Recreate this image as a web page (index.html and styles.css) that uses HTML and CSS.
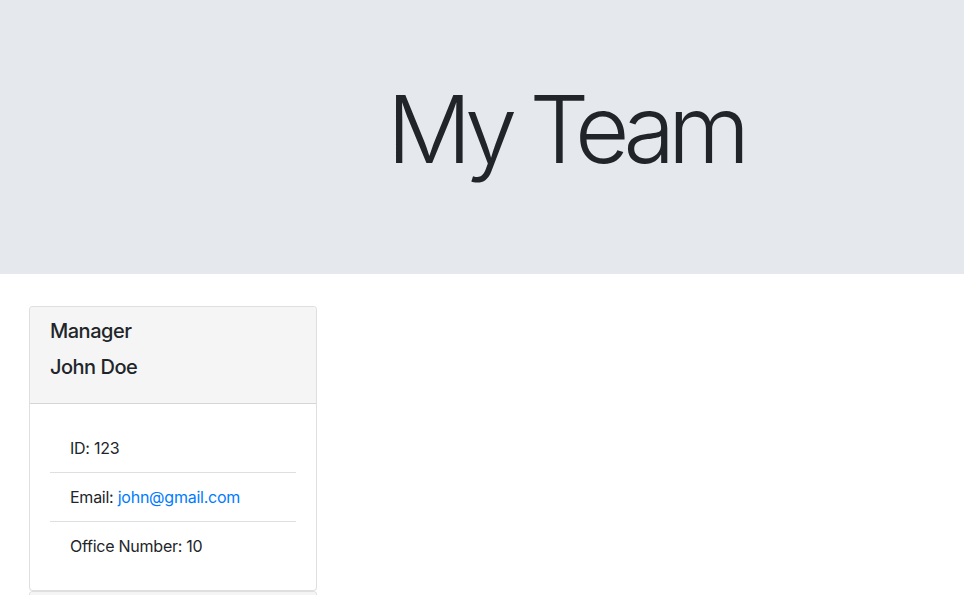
FILE: index.html
```html
<!DOCTYPE html>
<html>
<head>
<meta charset="utf-8">
<link rel="stylesheet" href="styles.css">
</head>
<body>
<header class="jumbotron">
  <h1 class="display">My Team</h1>
</header>
<main class="team">
  <div class="card">
    <div class="card-header">
      <h5 class="card-title">Manager</h5>
      <h5 class="card-title">John Doe</h5>
    </div>
    <div class="card-body">
      <ul class="list-group">
        <li class="list-item">ID: 123</li>
        <li class="list-item">Email: <a href="#">john@gmail.com</a></li>
        <li class="list-item">Office Number: 10</li>
      </ul>
    </div>
  </div>
  <div class="card"><div class="card-header"></div></div>
</main>
</body>
</html>
```
FILE: styles.css
```css
* { box-sizing: border-box; }
body {
  margin: 0;
  font-family: Inter, "Helvetica Neue", Arial, sans-serif;
  font-size: 16px;
  line-height: 1.5;
  color: #212529;
  background: #fff;
  letter-spacing: -0.25px;
}
.jumbotron {
  background: #e5e8ec;
  height: 274px;
  margin-bottom: 32px;
  display: flex;
  align-items: center;
  justify-content: center;
  padding-left: 166px;
}
.display {
  margin: -16px 0 0;
  font-size: 94px;
  font-weight: 300;
  line-height: 1.2;
  letter-spacing: -7px;
}
.team {
  padding: 0 29px;
  display: flex;
  flex-direction: column;
  align-items: flex-start;
}
.card {
  width: 288px;
  border: 1px solid rgba(0,0,0,.125);
  border-radius: 4px;
  background: #fff;
  overflow: hidden;
}
.card-header {
  background: #f5f5f5;
  padding: 12px 20px 12px;
  border-bottom: 1px solid rgba(0,0,0,.125);
  min-height: 40px;
}
.card-title {
  margin: 0 0 12px;
  font-size: 20px;
  font-weight: 500;
  line-height: 1.2;
  letter-spacing: -0.5px;
}
.card-body { padding: 20px; }
.list-group { list-style: none; margin: 0; padding: 0; }
.list-item {
  padding: 12px 20px;
  border-bottom: 1px solid rgba(0,0,0,.125);
}
.list-item:last-child { border-bottom: 0; }
a { color: #007bff; text-decoration: none; }
```
